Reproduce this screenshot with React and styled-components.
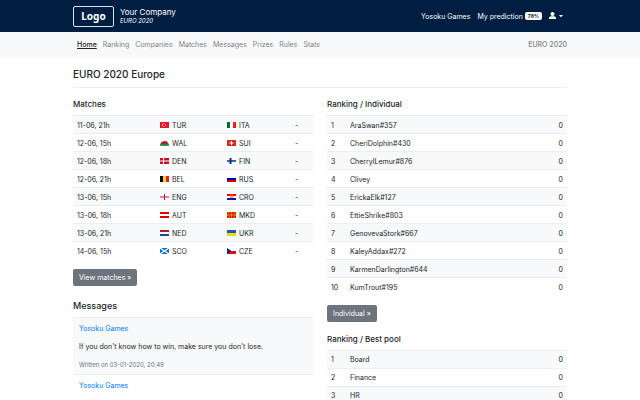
import React from 'react';
import styled, { createGlobalStyle, css } from 'styled-components';

const GlobalStyle = createGlobalStyle`
  * {
    box-sizing: border-box;
  }
  body {
    margin: 0;
    background: #fff;
    color: #212529;
    font-family: Inter, "Liberation Sans", sans-serif;
    font-size: 7px;
    line-height: 11px;
  }
  a {
    color: #007bff;
    text-decoration: none;
  }
`;

const Container = styled.div`
  width: 100%;
  max-width: 508px;
  margin: 0 auto;
  padding: 0 7px;
`;

const TopBar = styled.header`
  background: #001e42;
  color: #fff;
`;

const TopBarInner = styled(Container)`
  display: flex;
  align-items: center;
  justify-content: space-between;
  height: 32px;
`;

const Brand = styled.a`
  display: flex;
  align-items: center;
  gap: 6px;
  color: #fff;
`;

const Logo = styled.span`
  display: flex;
  align-items: center;
  justify-content: center;
  width: 41px;
  height: 21px;
  border: 1px solid #dfe4ea;
  border-radius: 2px;
  font-family: "Noto Sans", sans-serif;
  font-size: 10px;
  font-weight: 700;
`;

const BrandText = styled.span`
  display: flex;
  flex-direction: column;
  font-size: 8px;
  line-height: 10px;
`;

const Tournament = styled.em`
  font-size: 6px;
  line-height: 8px;
`;

const UserNav = styled.nav`
  display: flex;
  align-items: center;
  gap: 7px;
  padding-right: 4px;

  a {
    display: flex;
    align-items: center;
    gap: 2px;
    color: #fff;
  }
`;

const Badge = styled.span`
  padding: 0 3px;
  border-radius: 2px;
  background: #f8f9fa;
  color: #212529;
  font-size: 5px;
  font-weight: 700;
  line-height: 8px;
`;

const UserButton = styled.button`
  display: flex;
  align-items: center;
  gap: 3px;
  padding: 0;
  border: 0;
  background: none;
  color: #fff;
`;

const SubBar = styled.div`
  background: #f8f9fa;
`;

const SubBarInner = styled(Container)`
  display: flex;
  align-items: center;
  justify-content: space-between;
  height: 25px;
  color: #7f8183;
`;

const Menu = styled.nav`
  display: flex;
  gap: 6px;
  padding-left: 4px;
`;

const MenuLink = styled.a`
  color: #7f8183;
  ${({ $active }) => $active && css`
    color: #212529;
    font-weight: 500;
    text-decoration: underline;
  `}
`;

const Current = styled.span`
  font-weight: 500;
`;

const Title = styled.h1`
  margin: 0 0 13px;
  padding: 11px 0 7px;
  border-bottom: 1px solid #ebedef;
  font-size: 10px;
  font-weight: 500;
  line-height: 12px;
`;

const Columns = styled.div`
  display: grid;
  grid-template-columns: 1fr 1fr;
  gap: 14px;
`;

const Heading = styled.h2`
  margin: 0 0 8px;
  font-size: ${({ $large }) => ($large ? '9px' : '8px')};
  font-weight: 500;
  line-height: 6px;
`;

const Table = styled.table`
  width: 100%;
  border-collapse: collapse;
  table-layout: fixed;

  td {
    height: 18px;
    padding: 1px 4px 0;
    border-top: 1px solid #eceef0;
  }
  tr:nth-child(odd) {
    background: #f8f9fa;
  }
`;

const Col = styled.col`
  width: ${({ $width }) => $width};
`;

const Points = styled.td`
  text-align: right;
`;

const Team = styled.span`
  display: flex;
  align-items: center;
  gap: 3px;
`;

const Flag = styled.svg`
  width: 9px;
  height: 6px;
  flex: none;
`;

const Button = styled.button`
  display: block;
  height: 17px;
  margin: 9px 0 14px;
  padding: 0 6px;
  border: 0;
  border-radius: 2px;
  background: #6c757d;
  color: #fff;
  font: inherit;
`;

const Messages = styled.section`
  padding-top: 3px;
`;

const Message = styled.article`
  padding: 5px 6px 4px;
  border-top: 1px solid #eceef0;
  background: ${({ $striped }) => ($striped ? '#f8f9fa' : '#fff')};

  p {
    margin: 7px 0;
  }
`;

const Written = styled.small`
  display: block;
  color: #6c757d;
  font-size: 6px;
`;

const hStripes = (a, b, c) => (
  <>
    <path fill={a} d="M0 0h9v2H0z" />
    <path fill={b} d="M0 2h9v2H0z" />
    <path fill={c} d="M0 4h9v2H0z" />
  </>
);

const vStripes = (a, b, c) => (
  <>
    <path fill={a} d="M0 0h3v6H0z" />
    <path fill={b} d="M3 0h3v6H3z" />
    <path fill={c} d="M6 0h3v6H6z" />
  </>
);

const flags = {
  TUR: (
    <>
      <path fill="#e8152c" d="M0 0h9v6H0z" />
      <circle cx="3.7" cy="3" r="1.6" fill="#fff" />
      <circle cx="4.1" cy="3" r="1.2" fill="#e8152c" />
      <circle cx="5.4" cy="3" r=".6" fill="#fff" />
    </>
  ),
  ITA: vStripes('#086b2c', '#fff', '#f01c20'),
  WAL: (
    <>
      <path fill="#fff" d="M0 0h9v3H0z" />
      <path fill="#21a650" d="M0 3.500h9V6H0z" />
      <path fill="#a52230" d="M1 3.500l.5-2 1.200.5L4 .8l1.500.7L7 1l1 2.500-.5 1.200-1.500-.5-1.500.6-1.500-.6-1.500.6z" />
    </>
  ),
  SUI: (
    <>
      <path fill="#d52b1e" d="M0 0h9v6H0z" />
      <path fill="#fff" d="M4 1h1v1.5h1.5v1H5V5H4V3.500H2.500v-1H4z" />
    </>
  ),
  DEN: (
    <>
      <path fill="#c8102e" d="M0 0h9v6H0z" />
      <path fill="#fff" d="M3 0h1v6H3zM0 2.500h9v1H0z" />
    </>
  ),
  FIN: (
    <>
      <path fill="#fff" d="M0 0h9v6H0z" />
      <path fill="#003580" d="M2.500 0h2v6h-2zM0 2.200h9v1.600H0z" />
    </>
  ),
  BEL: vStripes('#000', '#ffd90c', '#f31830'),
  RUS: hStripes('#fff', '#0000a8', '#d50000'),
  ENG: (
    <>
      <path fill="#fff" d="M0 0h9v6H0z" />
      <path fill="#ce1124" d="M4 0h1v6H4zM0 2.500h9v1H0z" />
    </>
  ),
  CRO: (
    <>
      {hStripes('#f00', '#fff', '#171796')}
      <path fill="#e35050" d="M3.300 1.200h2.400v2.600l-1.200.8-1.200-.8z" />
      <path fill="#fff" d="M3.300 1.800h.8v.8h-.8zM4.900 1.800h.8v.8h-.8zM4.100 2.600h.8v.8h-.8z" />
    </>
  ),
  AUT: hStripes('#df0000', '#fff', '#df0000'),
  MKD: (
    <>
      <path fill="#d20000" d="M0 0h9v6H0z" />
      <path fill="#f5b800" d="M0 0h1.400L4.500 3 7.600 0H9L4.500 3 9 6H7.600L4.500 3 1.400 6H0l4.500-3zM4 0h1l-.5 3zM4 6h1l-.5-3zM0 2.300v1.400L4.500 3zM9 2.300v1.400L4.500 3z" />
      <circle cx="4.500" cy="3" r="1" fill="#ffce00" stroke="#d20000" strokeWidth=".3" />
    </>
  ),
  NED: hStripes('#ae1c28', '#fff', '#21468b'),
  UKR: (
    <>
      <path fill="#0f5fc0" d="M0 0h9v3H0z" />
      <path fill="#ffd500" d="M0 3h9v3H0z" />
    </>
  ),
  SCO: (
    <>
      <path fill="#0f6fc0" d="M0 0h9v6H0z" />
      <path stroke="#fff" strokeWidth="1.200" d="M0 0l9 6M9 0L0 6" />
    </>
  ),
  CZE: (
    <>
      <path fill="#fff" d="M0 0h9v3H0z" />
      <path fill="#d7141a" d="M0 3h9v3H0z" />
      <path fill="#11257e" d="M0 0l4.500 3L0 6z" />
    </>
  ),
};

const matches = [
  ['11-06, 21h', 'TUR', 'ITA'],
  ['12-06, 15h', 'WAL', 'SUI'],
  ['12-06, 18h', 'DEN', 'FIN'],
  ['12-06, 21h', 'BEL', 'RUS'],
  ['13-06, 15h', 'ENG', 'CRO'],
  ['13-06, 18h', 'AUT', 'MKD'],
  ['13-06, 21h', 'NED', 'UKR'],
  ['14-06, 15h', 'SCO', 'CZE'],
];

const players = [
  'AraSwan#357',
  'CheriDolphin#430',
  'CherrylLemur#876',
  'Clivey',
  'ErickaElk#127',
  'EttieShrike#803',
  'GenovevaStork#667',
  'KaleyAddax#272',
  'KarmenDarlington#644',
  'KumTrout#195',
];

const pools = ['Board', 'Finance', 'HR'];

const menu = ['Home', 'Ranking', 'Companies', 'Matches', 'Messages', 'Prizes', 'Rules', 'Stats'];

const TeamCell = ({ code }) => (
  <td>
    <Team>
      <Flag viewBox="0 0 9 6" aria-hidden="true">{flags[code]}</Flag>
      {code}
    </Team>
  </td>
);

const Ranking = ({ names }) => (
  <Table>
    <colgroup>
      <Col $width="19px" />
      <Col />
      <Col $width="30px" />
    </colgroup>
    <tbody>
      {names.map((name, i) => (
        <tr key={name}>
          <td>{i + 1}</td>
          <td>{name}</td>
          <Points>0</Points>
        </tr>
      ))}
    </tbody>
  </Table>
);

const App = () => (
  <>
    <GlobalStyle />
    <TopBar>
      <TopBarInner>
        <Brand href="#home">
          <Logo>Logo</Logo>
          <BrandText>
            Your Company
            <Tournament>EURO 2020</Tournament>
          </BrandText>
        </Brand>
        <UserNav>
          <a href="#games">Yosoku Games</a>
          <a href="#prediction">My prediction <Badge>78%</Badge></a>
          <UserButton aria-label="Account">
            <svg width="7" height="8" viewBox="0 0 7 8" fill="currentColor">
              <circle cx="3.500" cy="2" r="2" />
              <path d="M0 7V6.200C0 5 1 4.300 2 4.300h3c1 0 2 .7 2 1.900V7z" />
            </svg>
            <svg width="4" height="3" viewBox="0 0 4 3" fill="currentColor">
              <path d="M0 0h4L2 2.200z" />
            </svg>
          </UserButton>
        </UserNav>
      </TopBarInner>
    </TopBar>
    <SubBar>
      <SubBarInner>
        <Menu>
          {menu.map((item) => (
            <MenuLink key={item} href={`#${item.toLowerCase()}`} $active={item === 'Home'}>
              {item}
            </MenuLink>
          ))}
        </Menu>
        <Current>EURO 2020</Current>
      </SubBarInner>
    </SubBar>
    <Container as="main">
      <Title>EURO 2020 Europe</Title>
      <Columns>
        <section>
          <Heading>Matches</Heading>
          <Table>
            <colgroup>
              <Col $width="83px" />
              <Col $width="67px" />
              <Col />
              <Col $width="22px" />
            </colgroup>
            <tbody>
              {matches.map(([date, home, away]) => (
                <tr key={home}>
                  <td>{date}</td>
                  <TeamCell code={home} />
                  <TeamCell code={away} />
                  <td>-</td>
                </tr>
              ))}
            </tbody>
          </Table>
          <Button>View matches »</Button>
          <Messages>
            <Heading $large>Messages</Heading>
            <Message $striped>
              <a href="#games">Yosoku Games</a>
              <p>If you don't know how to win, make sure you don't lose.</p>
              <Written>Written on 03-01-2020, 20:49</Written>
            </Message>
            <Message>
              <a href="#games">Yosoku Games</a>
            </Message>
          </Messages>
        </section>
        <section>
          <Heading>Ranking / Individual</Heading>
          <Ranking names={players} />
          <Button>Individual »</Button>
          <Heading>Ranking / Best pool</Heading>
          <Ranking names={pools} />
        </section>
      </Columns>
    </Container>
  </>
);

export default App;
